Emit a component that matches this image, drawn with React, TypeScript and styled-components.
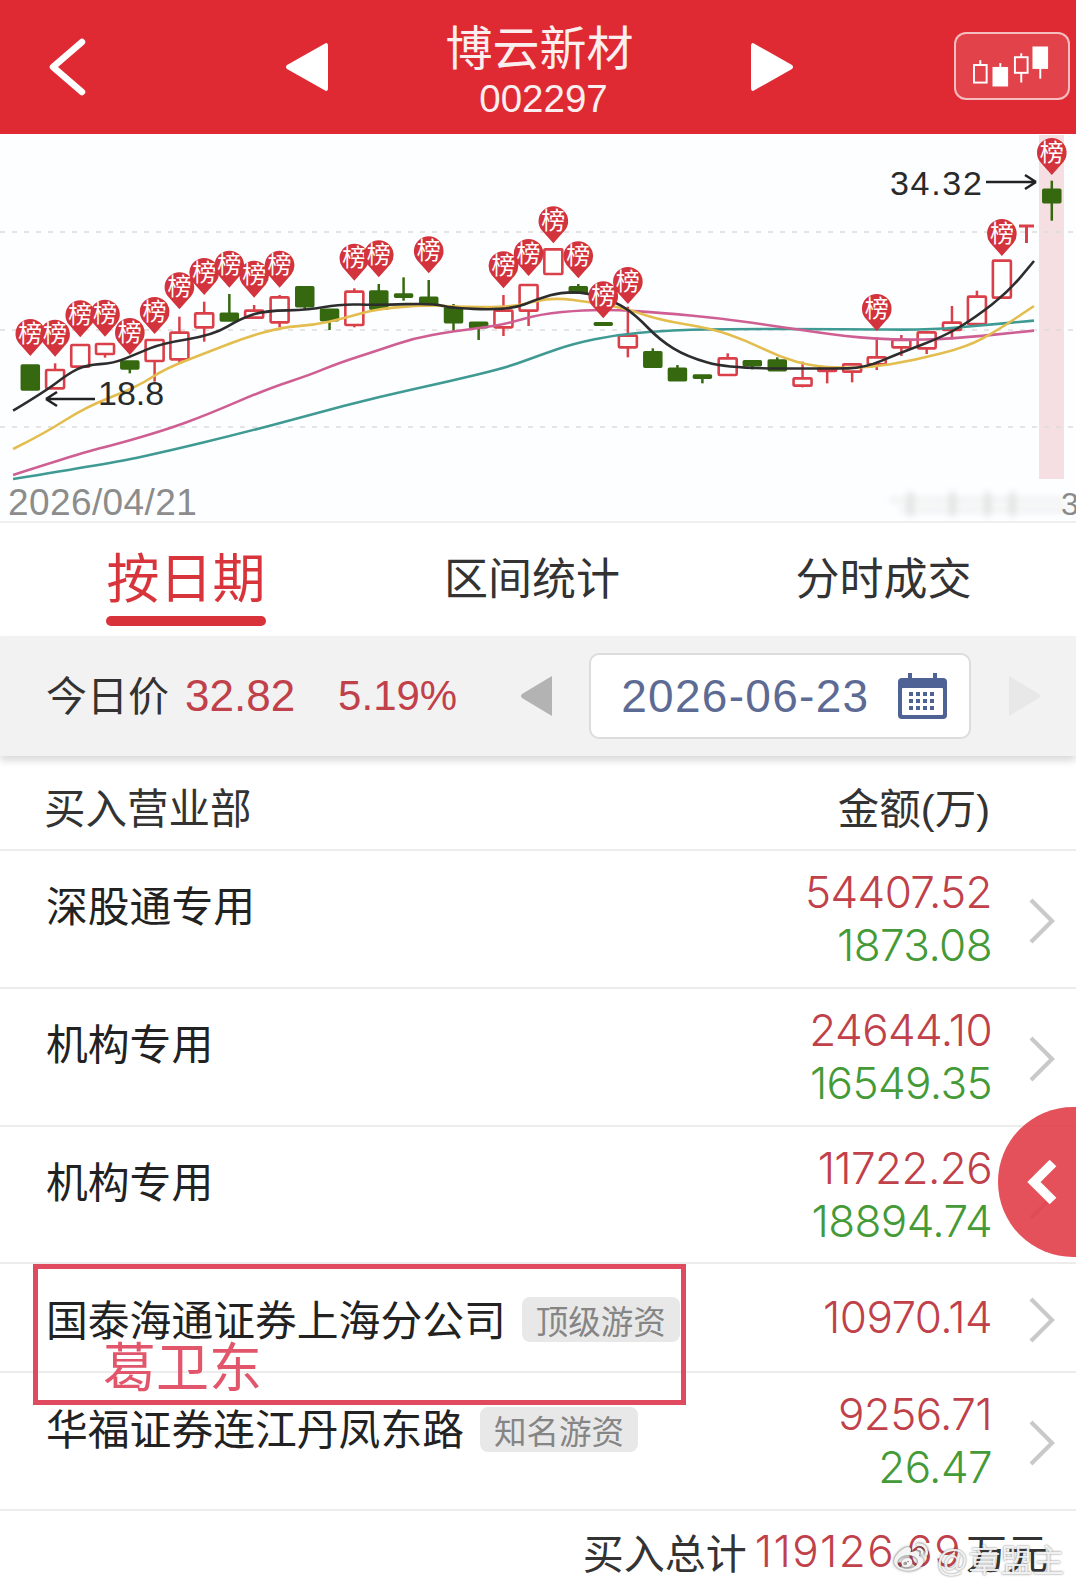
import styled, { createGlobalStyle } from 'styled-components';
import { FaWeibo } from 'react-icons/fa';

const GlobalStyle = createGlobalStyle`
    html, body {
        margin: 0;
        padding: 0;
        background: #fff;
    }
    * {
        box-sizing: border-box;
    }
`;

const FONT = `"Liberation Sans", "Noto Sans CJK SC", sans-serif`;
const NUM_FONT = `Inter, "Liberation Sans", sans-serif`;
const RED = '#c0414a';
const GREEN = '#459a38';

const Page = styled.div`
    position: relative;
    width: 1076px;
    height: 1584px;
    overflow: hidden;
    background: #fff;
    font-family: ${FONT};
    color: #333;
`;

const Header = styled.header`
    height: 134px;
    background: #df2a33;
    color: #fff;
    display: flex;
    align-items: center;
    padding-left: 46px;
`;

const HeaderArrow = styled.svg<{ $gap: number }>`
    flex: none;
    margin-left: ${(p) => p.$gap}px;
`;

const TitleBlock = styled.div`
    width: 423px;
    text-align: center;
`;

const StockName = styled.div`
    font-size: 47px;
    line-height: 50px;
    margin-top: 14px;
    color: #fbeeee;
`;

const StockCode = styled.div`
    font-size: 38.5px;
    line-height: 50px;
    padding-left: 8px;
    color: #fbeeee;
`;

const KlineButton = styled.div`
    width: 116px;
    height: 68px;
    margin-left: 160px;
    margin-top: -2px;
    flex: none;
    border: 2px solid rgba(255, 255, 255, 0.65);
    border-radius: 12px;
    background: rgba(255, 255, 255, 0.12);
    display: flex;
    align-items: center;
    justify-content: center;
`;

const ChartPanel = styled.section`
    height: 389px;
    background: #fdfeff;
    border-bottom: 2px solid #efefef;
`;

const ChartSvg = styled.svg`
    display: block;
    width: 1076px;
    height: 387px;
`;

const Tabs = styled.nav`
    height: 113px;
    display: grid;
    grid-template-columns: 346px 346px 357px;
    padding-left: 13px;
    background: #fff;
`;

const Tab = styled.div<{ $active?: boolean }>`
    position: relative;
    text-align: center;
    font-size: ${(p) => (p.$active ? 53 : 44)}px;
    line-height: 113px;
    color: ${(p) => (p.$active ? '#d8343c' : '#333')};
`;

const TabMark = styled.span`
    position: absolute;
    left: 93px;
    top: 93px;
    width: 160px;
    height: 10px;
    border-radius: 5px;
    background: #d8323a;
`;

const PriceBar = styled.div`
    position: relative;
    height: 120px;
    background: #f2f2f2;
    box-shadow: 0 5px 7px rgba(0, 0, 0, 0.14);
    display: flex;
    align-items: center;
    padding-left: 46px;
`;

const PriceLabel = styled.span`
    font-size: 41px;
    width: 139px;
    margin-top: -7px;
    color: #333;
`;

const PriceValue = styled.span<{ $size: number; $gap: number }>`
    font-size: ${(p) => p.$size}px;
    color: ${RED};
    margin-right: ${(p) => p.$gap}px;
`;

const DateBox = styled.div`
    width: 382px;
    height: 86px;
    margin-left: 37px;
    margin-right: 38px;
    background: #fff;
    border: 2px solid #dcdcdc;
    border-radius: 10px;
    display: flex;
    align-items: center;
    justify-content: space-between;
    padding: 0 22px 0 30px;
`;

const DateText = styled.span`
    font-size: 46px;
    letter-spacing: 1.3px;
    color: #5d6b94;
`;

const TableHead = styled.div`
    height: 95px;
    padding: 7px 86px 0 44px;
    display: flex;
    align-items: center;
    justify-content: space-between;
    border-bottom: 2px solid #ececec;
    font-size: 41.5px;
`;

const Row = styled.div<{ $height: number }>`
    height: ${(p) => p.$height}px;
    display: flex;
    align-items: center;
    padding: 0 21px 0 46px;
    border-bottom: 2px solid #ececec;
`;

const NameCell = styled.div<{ $raise: number }>`
    flex: 1;
    display: flex;
    align-items: center;
    gap: 16px;
    font-size: 41.8px;
    color: #222;
    margin-bottom: ${(p) => p.$raise}px;
`;

const Tag = styled.span`
    height: 45px;
    margin-top: 4px;
    padding: 0 14px;
    display: inline-flex;
    align-items: center;
    border-radius: 8px;
    background: #e8e8e8;
    color: #858585;
    font-size: 32.5px;
`;

const Amounts = styled.div`
    text-align: right;
    margin-right: 37px;
`;

const Amount = styled.div<{ $buy?: boolean }>`
    font-family: ${NUM_FONT};
    font-weight: 300;
    font-size: 44px;
    letter-spacing: -0.6px;
    line-height: 53px;
    color: ${(p) => (p.$buy ? RED : GREEN)};
`;

const Footer = styled.div`
    height: 74px;
    padding: 6px 28px 0 0;
    display: flex;
    align-items: center;
    justify-content: flex-end;
    font-size: 41px;
    color: #333;
`;

const TotalValue = styled.span`
    font-family: ${NUM_FONT};
    font-weight: 300;
    font-size: 44px;
    letter-spacing: 1.4px;
    color: ${RED};
    margin-left: 8px;
    margin-right: 4px;
`;

const MarkBox = styled.div`
    position: absolute;
    left: 33px;
    top: 1264px;
    width: 653px;
    height: 141px;
    border: 5px solid #e04a5e;
`;

const MarkText = styled.div`
    position: absolute;
    left: 65px;
    top: 70px;
    font-size: 53px;
    line-height: 60px;
    color: #e2566b;
`;

const SideButton = styled.div`
    position: absolute;
    left: 998px;
    top: 1107px;
    width: 150px;
    height: 150px;
    border-radius: 50%;
    background: rgba(226, 62, 72, 0.9);
    display: flex;
    align-items: center;
    padding-left: 29px;
`;

const Watermark = styled.div`
    position: absolute;
    left: 888px;
    top: 1538px;
    display: flex;
    align-items: center;
    height: 40px;
    font-size: 32px;
    color: rgba(255, 255, 255, 0.88);
    text-shadow: 0 0 2px rgba(70, 70, 70, 0.8);
`;

const WeiboMark = styled(FaWeibo)`
    width: 46px;
    height: 34px;
    margin-right: 2px;
    color: #f4f4f4;
    filter: drop-shadow(0 0 1.5px rgba(50, 50, 50, 0.9));
`;

type Point = [number, number];
type Candle = { x: number; top: number; bottom: number; high?: number; low?: number };

// the chart was measured off two crops, so each half has its own mapping to page pixels
const L = (x: number, y: number): Point => [x / 2.904, 190 + y / 3];
const R = (x: number, y: number): Point => [540 + x / 2.925, 130 + y / 3];

const fromLeft = ([x, top, bottom, high, low]: number[]): Candle => ({
    x: L(x, 0)[0],
    top: L(0, top)[1],
    bottom: L(0, bottom)[1],
    high: high ? L(0, high)[1] : undefined,
    low: low ? L(0, low)[1] : undefined,
});

const fromRight = ([x, top, bottom, high, low]: number[]): Candle => ({
    x: R(x, 0)[0],
    top: R(0, top)[1],
    bottom: R(0, bottom)[1],
    high: high ? R(0, high)[1] : undefined,
    low: low ? R(0, low)[1] : undefined,
});

const upCandles: Candle[] = [
    ...[
        [160, 540, 595, 520, 0],
        [233, 465, 530, 0, 0],
        [305, 462, 492, 0, 503],
        [449, 450, 513, 0, 575],
        [521, 428, 508, 380, 518],
        [593, 370, 412, 335, 455],
        [738, 362, 383, 345, 0],
        [812, 322, 397, 315, 412],
        [1029, 305, 405, 295, 412],
        [1462, 362, 412, 315, 438],
        [1535, 285, 362, 0, 408],
    ].map(fromLeft),
    ...[
        [39, 358, 432, 0, 0],
        [257, 617, 652, 530, 682],
        [549, 685, 735, 670, 0],
        [768, 745, 767, 695, 772],
        [840, 715, 723, 0, 760],
        [913, 703, 725, 0, 757],
        [985, 682, 703, 622, 720],
        [1057, 630, 652, 615, 678],
        [1131, 607, 655, 0, 672],
        [1205, 578, 600, 528, 628],
        [1278, 500, 582, 482, 0],
        [1351, 392, 503, 0, 0],
    ].map(fromRight),
];

const downCandles: Candle[] = [
    ...[
        [88, 525, 600, 0, 0],
        [377, 513, 537, 0, 550],
        [666, 370, 393, 312, 0],
        [885, 290, 350, 0, 358],
        [957, 358, 392, 0, 420],
        [1100, 303, 358, 282, 0],
        [1172, 312, 322, 262, 332],
        [1245, 322, 345, 270, 0],
        [1317, 352, 398, 342, 425],
        [1390, 397, 413, 0, 450],
    ].map(fromLeft),
    ...[
        [112, 470, 490, 462, 0],
        [185, 578, 586, 0, 0],
        [330, 665, 712, 655, 0],
        [402, 715, 752, 705, 0],
        [475, 735, 745, 0, 760],
        [621, 692, 707, 0, 718],
        [694, 690, 722, 682, 0],
        [1497, 178, 218, 152, 272],
    ].map(fromRight),
];

const pinTips: Point[] = [
    ...([
        [88, 498], [160, 500], [233, 442], [305, 440], [377, 495], [449, 432], [521, 358], [593, 315],
        [666, 293], [738, 323], [812, 293], [1029, 272], [1100, 262], [1245, 250], [1462, 295], [1535, 258],
    ] as Point[]).map(([x, y]) => L(x, y)),
    ...([
        [39, 340], [112, 445], [185, 565], [257, 522], [985, 603], [1351, 378], [1497, 135],
    ] as Point[]).map(([x, y]) => R(x, y)),
];

const maLines: { color: string; points: Point[] }[] = [
    {
        color: '#3f9a93',
        points: [
            L(38, 867), L(330, 818), L(480, 785), L(700, 730), L(900, 675), L(1100, 620), L(1300, 575), L(1480, 530),
            R(0, 675), R(100, 640), R(220, 615), R(350, 603), R(500, 597), R(900, 597), R(1140, 600), R(1300, 585), R(1445, 572),
        ],
    },
    {
        color: '#cf5f93',
        points: [
            L(38, 855), L(250, 785), L(330, 765), L(480, 720), L(600, 675), L(780, 595), L(900, 555), L(980, 520),
            L(1100, 480), L(1200, 445), L(1310, 425), L(1460, 405),
            R(0, 552), R(130, 540), R(230, 540), R(350, 548), R(530, 565), R(700, 590), R(900, 620), R(1050, 630), R(1200, 627), R(1445, 602),
        ],
    },
    {
        color: '#e3bd4e',
        points: [
            L(38, 777), L(130, 730), L(250, 650), L(400, 590), L(480, 535), L(620, 480), L(720, 440), L(820, 412),
            L(910, 405), L(1000, 385), L(1100, 355), L(1260, 345), L(1310, 350), L(1480, 352),
            R(0, 510), R(60, 505), R(135, 515), R(250, 535), R(350, 570), R(500, 595), R(600, 630), R(700, 680), R(800, 710),
            R(950, 716), R(1100, 690), R(1250, 650), R(1340, 600), R(1445, 528),
        ],
    },
    {
        color: '#2d2d2d',
        points: [
            L(38, 662), L(130, 605), L(200, 550), L(250, 525), L(330, 520), L(400, 490), L(470, 460), L(620, 435),
            L(700, 385), L(770, 362), L(900, 360), L(985, 342), L(1100, 345), L(1260, 340), L(1310, 355), L(1480, 360),
            R(0, 505), R(60, 487), R(135, 487), R(220, 515), R(280, 555), R(350, 630), R(430, 680), R(550, 715), R(850, 716),
            R(950, 714), R(1050, 670), R(1180, 620), R(1270, 565), R(1370, 485), R(1445, 393),
        ],
    },
];

// quadratic segments through the midpoints keep the averages from looking jagged
const smoothPath = (points: Point[]) => {
    let d = `M${points[0][0]} ${points[0][1]}`;
    for (let i = 1; i < points.length - 1; i++) {
        const mx = (points[i][0] + points[i + 1][0]) / 2;
        const my = (points[i][1] + points[i + 1][1]) / 2;
        d += ` Q${points[i][0]} ${points[i][1]} ${mx} ${my}`;
    }
    const last = points[points.length - 1];
    return `${d} L${last[0]} ${last[1]}`;
};

const CandleMark = ({ candle, up }: { candle: Candle; up: boolean }) => {
    const color = up ? '#d9404a' : '#35680f';
    return (
        <g stroke={color}>
            {candle.high && <line x1={candle.x} x2={candle.x} y1={candle.high} y2={candle.top} strokeWidth={2.5} />}
            {candle.low && <line x1={candle.x} x2={candle.x} y1={candle.bottom} y2={candle.low} strokeWidth={2.5} />}
            <rect
                x={candle.x - 9}
                y={candle.top}
                width={18}
                height={candle.bottom - candle.top}
                strokeWidth={up ? 2.6 : 1.5}
                fill={up ? 'rgba(255,255,255,0.55)' : color}
                rx={1}
            />
        </g>
    );
};

const Pin = ({ tip }: { tip: Point }) => {
    const [x, y] = tip;
    return (
        <g transform={`translate(${x} ${y - 22.5})`}>
            <path d="M0 22.5 L-11.8 9.2 A14.8 14.8 0 1 1 11.8 9.2 Z" fill="#d2333c" />
            <text x={0} y={8} textAnchor="middle" fontSize={24} fill="#fff" fontFamily={FONT}>
                榜
            </text>
        </g>
    );
};

const KLineChart = () => (
    <ChartSvg viewBox="0 134 1076 387" overflow="visible">
        <defs>
            <filter id="smudge" x="-10%" y="-60%" width="120%" height="220%">
                <feGaussianBlur stdDeviation="3.5" />
            </filter>
        </defs>
        <rect x={1039} y={135} width={25} height={344} fill="#f6dfe2" />
        {[232, 330, 427].map((y) => (
            <line key={y} x1={0} x2={1076} y1={y} y2={y} stroke="#dcdcdc" strokeWidth={1.5} strokeDasharray="5 7" />
        ))}
        {upCandles.map((c, i) => (
            <CandleMark key={`u${i}`} candle={c} up />
        ))}
        {downCandles.map((c, i) => (
            <CandleMark key={`d${i}`} candle={c} up={false} />
        ))}
        {maLines.map((line) => (
            <path key={line.color} d={smoothPath(line.points)} fill="none" stroke={line.color} strokeWidth={2.6} />
        ))}
        <path d="M1019 226 H1034 M1026.5 226 V243" stroke="#d9404a" strokeWidth={3} fill="none" />
        {pinTips.map((tip, i) => (
            <Pin key={i} tip={tip} />
        ))}
        <path d="M46 399 H95 M46 399 L57 392 M46 399 L57 406" stroke="#222" strokeWidth={2.6} fill="none" />
        <text x={98} y={405} fontSize={34} fill="#2a2a2a" fontFamily={FONT}>
            18.8
        </text>
        <text x={890} y={195} fontSize={34} letterSpacing={1.7} fill="#2a2a2a" fontFamily={FONT}>
            34.32
        </text>
        <path d="M986 182 H1036 M1036 182 L1025 175 M1036 182 L1025 189" stroke="#222" strokeWidth={2.6} fill="none" />
        <text x={8} y={515} fontSize={37} letterSpacing={0.4} fill="#8c8c8c" fontFamily={FONT}>
            2026/04/21
        </text>
        <g filter="url(#smudge)" fill="#dcdcdc">
            <rect x={890} y={498} width={175} height={4} opacity={0.6} />
            <rect x={900} y={508} width={170} height={4} opacity={0.6} />
            <rect x={908} y={492} width={5} height={24} />
            <rect x={950} y={492} width={5} height={24} />
            <rect x={985} y={492} width={5} height={24} />
            <rect x={1010} y={492} width={5} height={24} />
        </g>
        <text x={1061} y={515} fontSize={32} fill="#8a8a8a" fontFamily={FONT}>
            3
        </text>
    </ChartSvg>
);

const KlineIcon = () => (
    <svg width="78" height="42" viewBox="975 45 80 42" fill="none" stroke="#fff" strokeWidth="2">
        <rect x="976" y="65" width="13" height="18" />
        <path d="M982.5 60 V65" />
        <rect x="996" y="68" width="14" height="18" fill="#fff" />
        <path d="M1003 63 V68" />
        <rect x="1018" y="57" width="13" height="16" />
        <path d="M1024.5 53 V57 M1024.5 73 V83" />
        <rect x="1037" y="47" width="14" height="21" fill="#fff" />
        <path d="M1044 68 V79" />
    </svg>
);

const CalendarIcon = () => (
    <svg width="49" height="46" viewBox="0 0 49 46">
        <rect x="0" y="5" width="49" height="41" rx="4" fill="#4f6295" />
        <rect x="4" y="15" width="41" height="27" rx="1" fill="#fff" />
        <rect x="10" y="0" width="4" height="11" fill="#4f6295" />
        <rect x="35" y="0" width="4" height="11" fill="#4f6295" />
        {[19, 26, 33].map((y) =>
            [11, 18, 25, 32].map((x) => <rect key={`${x}-${y}`} x={x} y={y} width="4" height="4" fill="#4f6295" />),
        )}
    </svg>
);

const ToolbarArrow = ({ dir, color }: { dir: 'left' | 'right'; color: string }) => (
    <svg width="32" height="40" viewBox="0 0 32 40" style={{ flex: 'none' }}>
        <path
            d={dir === 'left' ? 'M32 0 V40 L2 22 Q0 20 2 18 Z' : 'M0 0 V40 L30 22 Q32 20 30 18 Z'}
            fill={color}
        />
    </svg>
);

const RowChevron = () => (
    <svg width="26" height="46" viewBox="0 0 26 46" fill="none" style={{ flex: 'none', marginTop: 4 }}>
        <path d="M2 2 L23 23 L2 44" stroke="#c9c9c9" strokeWidth="4.2" />
    </svg>
);

const rows = [
    { name: '深股通专用', buy: '54407.52', sell: '1873.08', height: 138, raise: 30 },
    { name: '机构专用', buy: '24644.10', sell: '16549.35', height: 138, raise: 30 },
    { name: '机构专用', buy: '11722.26', sell: '18894.74', height: 137, raise: 30 },
    { name: '国泰海通证券上海分公司', buy: '10970.14', tag: '顶级游资', height: 109, raise: 0 },
    { name: '华福证券连江丹凤东路', buy: '9256.71', sell: '26.47', tag: '知名游资', height: 138, raise: 28 },
];

const App = () => {
    return (
        <Page>
            <GlobalStyle />
            <Header>
                <HeaderArrow $gap={2} width="38" height="58" viewBox="0 0 38 58" fill="none">
                    <path d="M34 4 L5 29 L34 54" stroke="#fff" strokeWidth="6.5" strokeLinecap="round" strokeLinejoin="round" />
                </HeaderArrow>
                <HeaderArrow $gap={199} width="43" height="50" viewBox="0 0 43 50">
                    <path d="M41 1 Q43 1 43 4 V46 Q43 49 41 49 L2 27 Q0 25 2 23 Z" fill="#fff" />
                </HeaderArrow>
                <TitleBlock>
                    <StockName>博云新材</StockName>
                    <StockCode>002297</StockCode>
                </TitleBlock>
                <HeaderArrow $gap={0} width="43" height="50" viewBox="0 0 43 50">
                    <path d="M2 1 Q0 1 0 4 V46 Q0 49 2 49 L41 27 Q43 25 41 23 Z" fill="#fff" />
                </HeaderArrow>
                <KlineButton>
                    <KlineIcon />
                </KlineButton>
            </Header>

            <ChartPanel>
                <KLineChart />
            </ChartPanel>

            <Tabs>
                <Tab $active>
                    按日期
                    <TabMark />
                </Tab>
                <Tab>区间统计</Tab>
                <Tab>分时成交</Tab>
            </Tabs>

            <PriceBar>
                <PriceLabel>今日价</PriceLabel>
                <PriceValue $size={44} $gap={43}>32.82</PriceValue>
                <PriceValue $size={42} $gap={63}>5.19%</PriceValue>
                <ToolbarArrow dir="left" color="#b3b3b3" />
                <DateBox>
                    <DateText>2026-06-23</DateText>
                    <CalendarIcon />
                </DateBox>
                <ToolbarArrow dir="right" color="#e8e8e8" />
            </PriceBar>

            <TableHead>
                <span>买入营业部</span>
                <span>金额(万)</span>
            </TableHead>

            {rows.map((row, index) => (
                <Row key={index} $height={row.height}>
                    <NameCell $raise={row.raise}>
                        {row.name}
                        {row.tag && <Tag>{row.tag}</Tag>}
                    </NameCell>
                    <Amounts>
                        <Amount $buy>{row.buy}</Amount>
                        {row.sell && <Amount>{row.sell}</Amount>}
                    </Amounts>
                    <RowChevron />
                </Row>
            ))}

            <Footer>
                买入总计<TotalValue>119126.69</TotalValue>万元
            </Footer>

            <MarkBox>
                <MarkText>葛卫东</MarkText>
            </MarkBox>

            <SideButton>
                <svg width="32" height="48" viewBox="0 0 32 48" fill="none">
                    <path d="M26 5 L7 24 L26 43" stroke="#fff" strokeWidth="9.5" />
                </svg>
            </SideButton>

            <Watermark>
                <WeiboMark />
                @章盟主
            </Watermark>
        </Page>
    );
};

export default App;
